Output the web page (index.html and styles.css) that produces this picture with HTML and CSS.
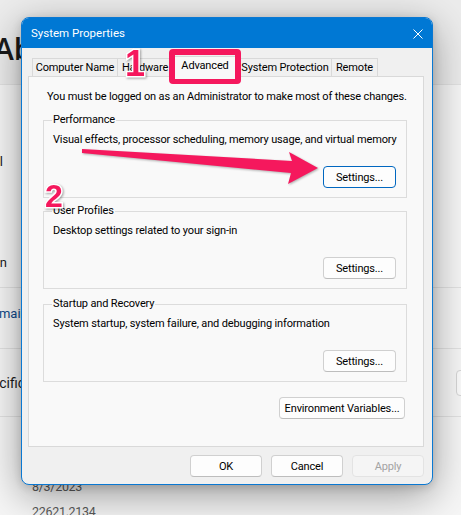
FILE: index.html
```html
<!DOCTYPE html>
<html lang="en">
<head>
<meta charset="utf-8">
<title>System Properties</title>
<link rel="stylesheet" href="styles.css">
</head>
<body>
<div class="bg">
  <div class="bg-head"><h1 class="bg-title">About</h1></div>
  <div class="bg-card bg-specs">
    <div class="bg-row bg-row-a"><span class="clip clip-l"><span>Model</span></span></div>
    <div class="bg-row bg-row-b"><span class="clip clip-n"><span>Pen version</span></span></div>
  </div>
  <div class="bg-card bg-links">
    <span class="bg-link">Domain or workgroup</span>
  </div>
  <div class="bg-card bg-win">
    <div class="bg-win-head">
      <span class="bg-win-title">Windows specifications</span>
      <span class="bg-copy">Copy</span>
    </div>
    <div class="bg-kv"><span class="bg-key">Installed on</span><span class="bg-val">8/3/2023</span></div>
    <div class="bg-kv"><span class="bg-key">OS build</span><span class="bg-val">22621.2134</span></div>
  </div>
</div>

<div class="dialog">
  <div class="titlebar">
    <span class="title">System Properties</span>
    <svg class="close" width="10" height="10" viewBox="0 0 10 10"><path d="M0.5 0.5 L9.5 9.5 M9.5 0.5 L0.5 9.5" stroke="#fff" stroke-width="1" fill="none"/></svg>
  </div>
  <div class="dlg-body">
    <div class="tabs">
      <div class="tab tab-cn">Computer Name</div>
      <div class="tab tab-hw">Hardware</div>
      <div class="tab tab-adv active">Advanced</div>
      <div class="tab tab-sp">System Protection</div>
      <div class="tab tab-rm">Remote</div>
    </div>
    <div class="panel">
      <p class="note">You must be logged on as an Administrator to make most of these changes.</p>
      <fieldset class="group">
        <legend>Performance</legend>
        <p class="desc">Visual effects, processor scheduling, memory usage, and virtual memory</p>
        <div class="btn-row"><button class="btn focus">Settings...</button></div>
      </fieldset>
      <fieldset class="group group-mid">
        <legend>User Profiles</legend>
        <p class="desc">Desktop settings related to your sign-in</p>
        <div class="btn-row"><button class="btn">Settings...</button></div>
      </fieldset>
      <fieldset class="group">
        <legend>Startup and Recovery</legend>
        <p class="desc">System startup, system failure, and debugging information</p>
        <div class="btn-row"><button class="btn">Settings...</button></div>
      </fieldset>
      <div class="env-row"><button class="btn btn-env">Environment Variables...</button></div>
    </div>
    <div class="footer">
      <button class="btn">OK</button>
      <button class="btn">Cancel</button>
      <button class="btn disabled">Apply</button>
    </div>
  </div>
</div>

<div class="hl-box"></div>
<span class="mark mark-1">1</span>
<span class="mark mark-2">2</span>
<svg class="arrow" width="461" height="515" viewBox="0 0 461 515">
  <polygon points="82,149 292,161 289,152 318,168 288,184 291,173 82,153" fill="#f5185d"/>
</svg>
</body>
</html>
```
FILE: styles.css
```css
* { box-sizing: border-box; }
html, body { margin: 0; padding: 0; }
body {
  width: 461px;
  height: 515px;
  overflow: hidden;
  position: relative;
  background: #ececec;
  font-family: Roboto, "Liberation Sans", sans-serif;
  color: #000;
}

/* ---------- background settings page ---------- */
.bg { width: 461px; }
.bg-head { height: 84px; padding-top: 31px; }
.bg-title {
  margin: 0 0 0 -6px;
  font: 600 30px/36px "Open Sans", sans-serif;
  color: #1a1a1a;
}
.bg-card {
  background: #f6f6f6;
  border-top: 1px solid #e2e2e2;
}
.bg-specs { height: 203px; padding-top: 70px; }
.bg-row { height: 14px; font-size: 13px; line-height: 14px; color: #1a1a1a; }
.bg-row-b { margin-top: 87px; }
.clip { display: flex; justify-content: flex-end; overflow: hidden; white-space: nowrap; }
.clip-l { width: 3px; }
.clip-n { width: 7px; }
.bg-links { height: 61px; padding-top: 19px; }
.bg-link { display: block; margin-left: -17px; font-size: 13px; line-height: 14px; color: #0f4a8a; white-space: nowrap; }
.bg-win { height: 200px; }
.bg-win-head {
  height: 68px;
  display: flex; align-items: center; justify-content: space-between;
  border-bottom: 1px solid #e2e2e2;
}
.bg-win-title { margin-left: -84px; font-size: 14px; color: #1a1a1a; white-space: nowrap; }
.bg-copy {
  width: 60px; height: 26px; margin-right: -55px;
  border: 1px solid #d6d6d6; border-radius: 4px; background: #fbfbfb;
  font-size: 13px; line-height: 24px; padding-left: 5px; color: #1a1a1a;
}
.bg-kv { display: flex; height: 25px; font-size: 12.5px; line-height: 25px; letter-spacing: -0.3px; color: #5a5a5a; }
.bg-win-head + .bg-kv { margin-top: 57px; }
.bg-key { width: 150px; margin-left: -118px; }
.bg-val { white-space: nowrap; }

/* ---------- dialog window ---------- */
.dialog {
  position: absolute;
  z-index: 1;
  left: 21px; top: 17px;
  width: 412px; height: 468px;
  border: 1px solid #0a78d2;
  border-radius: 8px;
  overflow: hidden;
  display: flex; flex-direction: column;
  box-shadow: 0 10px 40px rgba(0,0,0,0.38), 0 2px 10px rgba(0,0,0,0.15);
  background: #f0f0f0;
  font-size: 11px;
  letter-spacing: -0.15px;
}
.titlebar {
  height: 30px; flex: none;
  background: #0078d4;
  display: flex; align-items: center; justify-content: space-between;
  padding: 0 9px 1px 9px;
}
.title { color: #fff; font-size: 11.5px; letter-spacing: 0; }
.close { display: block; margin-top: 2px; }

.dlg-body {
  flex: 1;
  display: flex; flex-direction: column;
  padding: 10px 8px 7px 6px;
}
.tabs {
  height: 18px;
  display: flex; align-items: flex-end;
  padding-left: 4px;
  position: relative; z-index: 1;
}
.tab {
  height: 18px;
  border: 1px solid #d9d9d9; border-bottom: none;
  margin-left: -1px;
  background: #f0f0f0;
  line-height: 17px;
  text-align: center;
  white-space: nowrap;
}
.tab:first-child { margin-left: 0; }
.tab-cn { width: 86px; }
.tab-hw { width: 54px; padding-left: 2px; }
.tab-adv { width: 72px; }
.tab-sp { width: 94px; }
.tab-rm { width: 47px; }
.tab.active {
  height: 21px;
  margin: 0 -2px -1px -2px;
  background: #f9f9f9;
  line-height: 17px;
  position: relative; z-index: 2;
}

.panel {
  height: 371px; flex: none;
  border: 1px solid #d9d9d9;
  background: #f9f9f9;
  padding: 13px 16px 0 14px;
}
.note { margin: 0 0 9px 4px; line-height: 14px; white-space: nowrap; }
.group {
  margin: 0 0 6px 0;
  padding: 6px 10px 9px 9px;
  border: 1px solid #dcdcdc;
  min-width: 0;
}
.group-mid { margin-bottom: 8px; }
.group legend { padding: 0 1px; margin-left: -1px; line-height: 14px; }
.desc { margin: 0; line-height: 14px; white-space: nowrap; }
.btn-row { display: flex; justify-content: flex-end; margin-top: 19px; }

.btn {
  font: inherit;
  letter-spacing: inherit;
  width: 73px; height: 22px;
  padding: 0;
  border: 1px solid #d0d0d0;
  border-bottom-color: #bdbdbd;
  border-radius: 4px;
  background: #fdfdfd;
  color: #000;
  white-space: nowrap;
}
.btn.focus { border: 1px solid #0067c0; }
.btn.disabled { background: #f5f5f5; border-color: #e3e3e3; color: #a3a3a3; }
.env-row { display: flex; justify-content: flex-end; margin-top: 15px; padding-right: 2px; }
.btn-env { width: 126px; }

.footer {
  margin-top: 8px;
  display: flex; justify-content: flex-end; gap: 9px;
}
.footer .btn { width: 72px; }

/* ---------- annotations ---------- */
.hl-box {
  position: absolute;
  z-index: 2;
  left: 169px; top: 49px;
  width: 72px; height: 35px;
  border: 6px solid #f5185d;
  border-bottom-width: 5px;
  border-radius: 4px;
}
.mark {
  position: absolute;
  z-index: 3;
  font-family: "Liberation Sans", Arial, sans-serif;
  font-weight: 700;
  color: #f5185d;
  -webkit-text-stroke: 3px #fff;
  paint-order: stroke fill;
  filter: drop-shadow(1px 1px 1px rgba(0,0,0,0.35));
  line-height: 1;
}
.mark-1 { left: 125px; top: 46px; font-size: 36px; }
.mark-2 { left: 45px; top: 180px; font-size: 32px; }
.arrow {
  position: absolute; z-index: 3; left: 0; top: 0;
  filter: drop-shadow(1px 1px 1px rgba(0,0,0,0.3));
}
```
